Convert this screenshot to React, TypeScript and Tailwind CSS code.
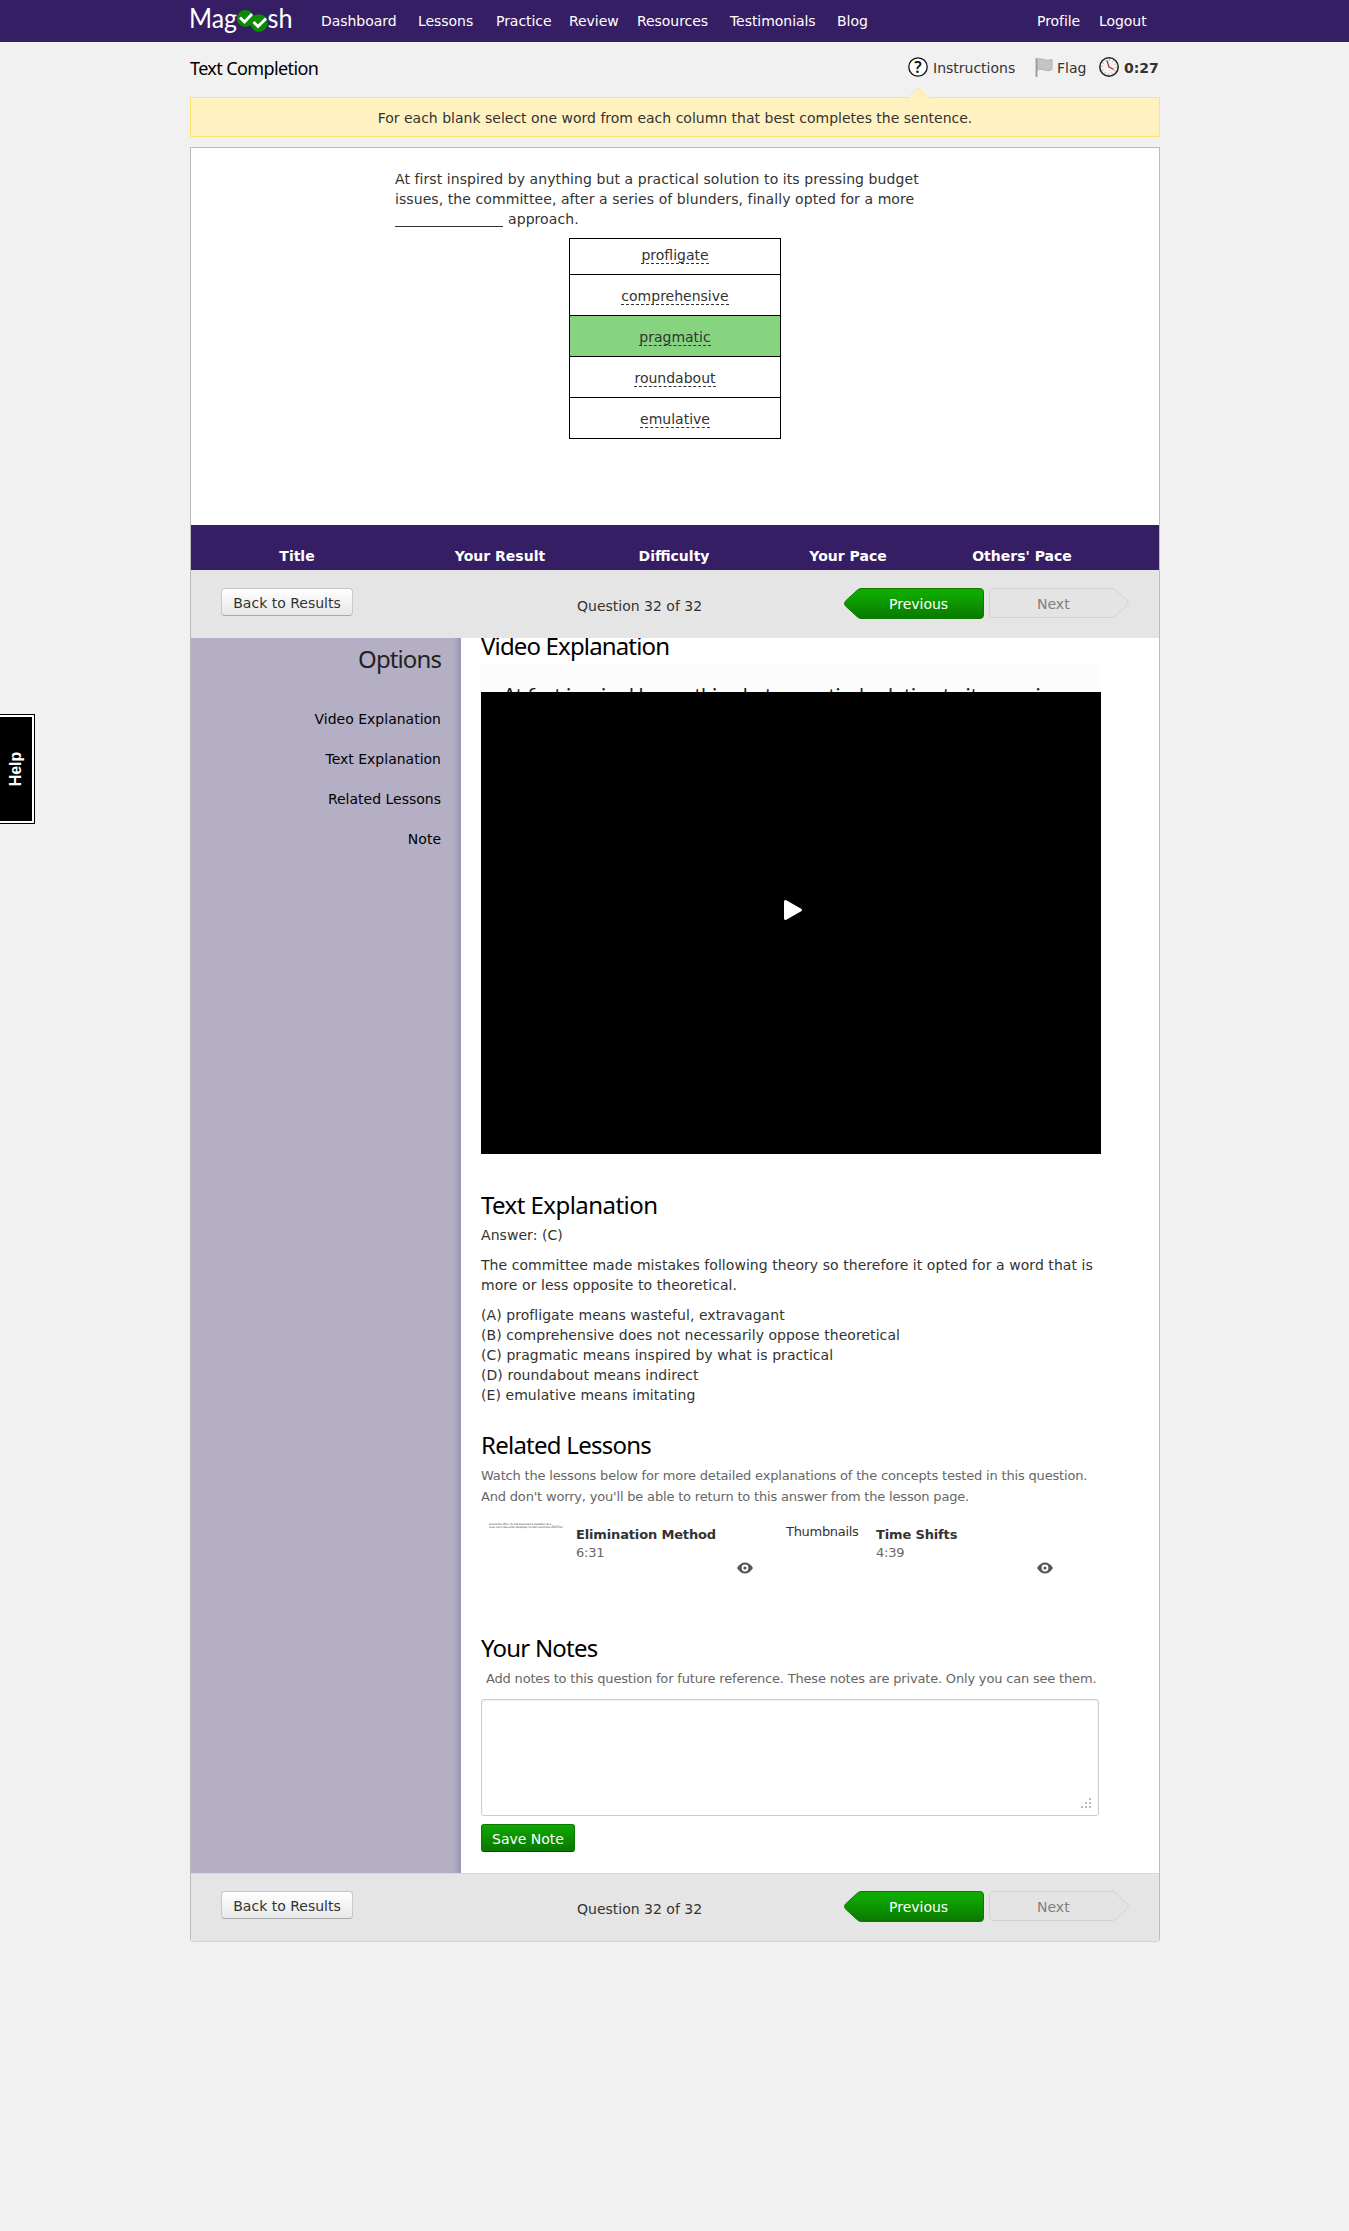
import React from "react";

const head = "font-['Noto_Sans',sans-serif] text-[24px] leading-[30px] text-black";

function NavBar() {
  const links = [
    ["Dashboard", "w-[97px]"], ["Lessons", "w-[78px]"], ["Practice", "w-[73px]"], ["Review", "w-[68px]"],
    ["Resources", "w-[93px]"], ["Testimonials", "w-[107px]"], ["Blog", "w-[200px]"], ["Profile", "w-[62px]"], ["Logout", "w-[52px]"],
  ];
  return (
    <nav className="h-[42px] bg-[#361e64] text-white">
      <div className="ml-[190px] flex w-[970px] items-start pt-[11px]">
        <svg className="-mt-[8px] mr-[29px] shrink-0" width="102" height="34" viewBox="0 0 102 34">
          <g fill="#fff" fontFamily="Lato, sans-serif" fontSize="27">
            <text x="-1" y="24.5" textLength="48" lengthAdjust="spacingAndGlyphs">Mag</text>
            <text x="77.5" y="24.5" textLength="25" lengthAdjust="spacingAndGlyphs">sh</text>
          </g>
          <circle cx="55.5" cy="15.5" r="8.5" fill="#0f8a07" />
          <circle cx="69" cy="20" r="8.7" fill="#0f8a07" />
          <g fill="none" stroke="#fff" strokeWidth="2.8">
            <path d="M50 14.500L54.500 19L62 11" />
            <path d="M63.500 19L68 23.500L76 15.500" />
          </g>
        </svg>
        {links.map(([t, w]) => (
          <a key={t} className={`${w} shrink-0 whitespace-nowrap leading-5 tracking-[-0.05px]`}>{t}</a>
        ))}
      </div>
    </nav>
  );
}

function Clock() {
  return (
    <svg width="20" height="20" viewBox="0 0 20 20">
      <circle cx="10" cy="10" r="9.200" fill="#f4f4f4" stroke="#222" strokeWidth="1.500" />
      <circle cx="10" cy="10" r="7" fill="none" stroke="#bbb" strokeWidth="2" strokeDasharray="1 2.660" />
      <path d="M8 3.500L10 10L15 12.500" fill="none" stroke="#b33030" strokeWidth="1.300" />
    </svg>
  );
}

function TopRow() {
  return (
    <div className="flex h-[55px] justify-between">
      <h1 className="pt-[14px] font-['Noto_Sans',sans-serif] text-[18px] leading-[24px] tracking-[-0.6px] text-black">Text Completion</h1>
      <div className="flex w-[252px] pt-[15px] leading-[22px]">
        <svg className="mr-[5px] shrink-0" width="20" height="20" viewBox="0 0 20 20">
          <circle cx="10" cy="10" r="9.200" fill="#fff" stroke="#111" strokeWidth="1.300" />
          <text x="10" y="15.800" textAnchor="middle" fontSize="16" fontWeight="600" fill="#111" fontFamily="Noto Sans">?</text>
        </svg>
        <span className="w-[102px] shrink-0">Instructions</span>
        <svg className="mr-[4px] shrink-0" width="18" height="20" viewBox="0 0 18 20">
          <path d="M1.500 1V20" stroke="#999" strokeWidth="1.800" />
          <path d="M2.500 2.500C6 0 10 5 17 2.500V12.500C11 16 8 10 2.500 13Z" fill="#c4c4c4" stroke="#b0b0b0" />
        </svg>
        <span className="w-[42px] shrink-0">Flag</span>
        <Clock />
        <b className="ml-[5px]">0:27</b>
      </div>
    </div>
  );
}

function Pager({ size }: { size: string }) {
  return (
    <div className={`${size} flex bg-[#e5e5e5] pl-[30px]`}>
      <button className="h-[28px] w-[132px] shrink-0 rounded-[4px] border border-[#c8c8c8] border-b-[#a8a8a8] bg-gradient-to-b from-white to-[#e8e8e8] pt-[1px] leading-[26px]">Back to Results</button>
      <span className="ml-[224px] w-[267px] pt-[6px] leading-[24px]">Question 32 of 32</span>
      <div className="relative h-[31px] w-[140px]">
        <svg className="absolute inset-0" width="140" height="31">
          <defs>
            <linearGradient id="g" x1="0" y1="0" x2="0" y2="1">
              <stop offset="0.200" stopColor="#0fa800" /><stop offset="1" stopColor="#0a7800" />
            </linearGradient>
          </defs>
          <path d="M17 .500H136Q139.500 .500 139.500 4V27Q139.500 30.500 136 30.500H17Q15 30.500 13 28.500L1.500 18Q-.500 15.500 1.500 13L13 2.500Q15 .500 17 .500Z" fill="url(#g)" stroke="#0b7a04" />
        </svg>
        <span className="relative ml-[45px] leading-[32px] text-white">Previous</span>
      </div>
      <div className="relative ml-[5px] h-[31px] w-[140px]">
        <svg className="absolute inset-0" width="140" height="31">
          <path d="M4 .500H123Q125 .500 126 1.500L138.500 13Q140.500 15 138.500 17L126 28.500Q125 29.500 123 29.500H4Q.500 29.500 .500 26V4Q.500 .500 4 .500Z" fill="#e4e4e4" stroke="#d2d2d2" />
        </svg>
        <span className="relative ml-[48px] leading-[32px] text-[#808080]">Next</span>
      </div>
    </div>
  );
}

function Choices() {
  const rows = [
    ["profligate", "h-[36px] pt-[7px]"],
    ["comprehensive", "h-[41px] pt-[12px]"],
    ["pragmatic", "h-[41px] pt-[12px] bg-[#87d480]"],
    ["roundabout", "h-[41px] pt-[12px]"],
    ["emulative", "h-[41px] pt-[12px]"],
  ];
  return (
    <div className="ml-[378px] mt-[9px] w-[212px] border border-b-0 border-black">
      {rows.map(([w, c]) => (
        <div key={w} className={`${c} border-b border-black text-center leading-[18px]`}>
          <span className="inline-block h-[18px] border-b border-dashed border-[#333] leading-[18px]">{w}</span>
        </div>
      ))}
    </div>
  );
}

function Eye() {
  return (
    <svg width="16" height="12" viewBox="0 0 16 12">
      <path d="M0 6Q3.500 .500 8 .500T16 6Q12.500 11.500 8 11.500T0 6Z" fill="#555" />
      <circle cx="8" cy="6" r="3.400" fill="#fff" /><circle cx="8" cy="6" r="1.600" fill="#555" />
    </svg>
  );
}

function Lesson({ thumb, title, time }: { thumb: React.ReactNode; title: string; time: string }) {
  return (
    <div className="flex h-[110px] w-[300px] text-[13px]">
      <div className="w-[95px] pl-[5px]">{thumb}</div>
      <div className="w-[180px] pt-[5px] leading-[18px]">
        <b className="tracking-[-0.15px] text-[#333]">{title}</b>
        <div className="tracking-[-0.2px] text-[#666]">{time}</div>
        <div className="ml-[161px]"><Eye /></div>
      </div>
    </div>
  );
}

function Explanation() {
  return (
    <div className="h-[1235px] flex-1 overflow-hidden pl-[20px]">
      <h2 className={`${head} -mt-[7px] tracking-[-0.85px]`}>Video Explanation</h2>
      <div className="mt-[4px] h-[27px] w-[620px] overflow-hidden bg-[#fcfcfc] pl-[22px] pt-[17px]">
        <div className="whitespace-nowrap font-['Lato',sans-serif] text-[19.5px] leading-[26px] text-[#222]">At first inspired by anything but a practical solution to its pressing</div>
      </div>
      <div className="flex h-[462px] w-[620px] items-center justify-center bg-black">
        <svg className="-mt-[26px] ml-[4px]" width="20" height="22" viewBox="0 0 20 22"><path d="M2.500 2.500L17.500 11L2.500 19.500Z" fill="#fff" stroke="#fff" strokeWidth="3" strokeLinejoin="round" /></svg>
      </div>
      <h2 className={`${head} mt-[36px] tracking-[-0.55px]`}>Text Explanation</h2>
      <div className="whitespace-nowrap tracking-[0.06px]">
        <p className="mt-[5px]">Answer: (C)</p>
        <p className="mt-[10px]">The committee made mistakes following theory so therefore it opted for a word that is<br />more or less opposite to theoretical.</p>
        <p className="mt-[10px]">
          (A) profligate means wasteful, extravagant<br />(B) comprehensive does not necessarily oppose theoretical<br />(C) pragmatic means inspired by what is practical<br />(D) roundabout means indirect<br />(E) emulative means imitating
        </p>
      </div>
      <h2 className={`${head} mt-[25px] tracking-[-0.75px]`}>Related Lessons</h2>
      <p className="mt-[5px] whitespace-nowrap text-[13px] leading-[21px] tracking-[-0.18px] text-[#666]">Watch the lessons below for more detailed explanations of the concepts tested in this question.<br />And don't worry, you'll be able to return to this answer from the lesson page.</p>
      <div className="mt-[14px] flex">
        <Lesson title="Elimination Method" time="6:31" thumb={
          <svg width="80" height="10" fill="#333" fontFamily="DejaVu Sans, sans-serif" fontSize="2.800">
            <text x="3" y="3.800" textLength="71" lengthAdjust="spacingAndGlyphs">Around the office, he had developed a reputation as a ______ :</text>
            <text x="3" y="6.600" textLength="74" lengthAdjust="spacingAndGlyphs">never one to take unfair advantage, he often would help others first.</text>
          </svg>} />
        <Lesson title="Time Shifts" time="4:39" thumb={<div className="pt-[2px] leading-[18px] tracking-[-0.3px]">Thumbnails</div>} />
      </div>
      <h2 className={`${head} mt-[2px] tracking-[-0.8px]`}>Your Notes</h2>
      <p className="ml-[5px] mt-[6px] whitespace-nowrap text-[13px] leading-[20px] tracking-[-0.18px] text-[#666]">Add notes to this question for future reference. These notes are private. Only you can see them.</p>
      <div className="mt-[10px] flex h-[117px] w-[618px] items-end justify-end rounded-[3px] border border-[#ccc] p-[6px] shadow-[inset_0_1px_2px_#eee]">
        <svg width="11" height="11" fill="#bbb"><path d="M8 0h2v2H8zM4 4h2v2H4zM8 4h2v2H8zM0 8h2v2H0zM4 8h2v2H4zM8 8h2v2H8z" /></svg>
      </div>
      <button className="mt-[8px] h-[28px] w-[94px] rounded-[3px] border border-[#0b7a04] border-b-[#064d00] bg-gradient-to-b from-[#0fa800] to-[#0a7800] pt-[1px] leading-[26px] text-white">Save Note</button>
    </div>
  );
}

export default function App() {
  return (
    <div className="relative h-[2231px] w-[1349px] overflow-hidden bg-[#f1f1f1] font-['DejaVu_Sans',sans-serif] text-[14px] leading-[20px] text-[#333]">
      <NavBar />
      <main className="ml-[190px] w-[970px]">
        <TopRow />
        <div className="relative h-[40px] border border-[#ffe46f] bg-[#fff2c0] text-center leading-[40px]">
          <svg className="absolute -top-[11px] left-[716px]" width="22" height="12"><path d="M0 12L11 1L22 12" fill="#fff2c0" stroke="#fde78f" /></svg>
          For each blank select one word from each column that best completes the sentence.
        </div>
        <section className="mt-[10px] overflow-hidden rounded-b-[4px] border border-[#bbb] border-b-[#d4d4d4] bg-white">
          <div className="h-[377px] pt-[21px]">
            <p className="ml-[204px] whitespace-nowrap tracking-[0.08px]">At first inspired by anything but a practical solution to its pressing budget<br />issues, the committee, after a series of blunders, finally opted for a more<br /><span className="mr-[5px] inline-block h-[15px] w-[108px] border-b border-[#333] align-[-3px]" />approach.</p>
            <Choices />
          </div>
          <div className="flex h-[45px] bg-[#361e64] pl-[19px] pt-[21px] text-center font-bold text-white">
            <span className="w-[174px]">Title</span><span className="w-[232px]">Your Result</span><span className="w-[116px]">Difficulty</span><span className="w-[232px]">Your Pace</span><span className="w-[116px]">Others' Pace</span>
          </div>
          <Pager size="h-[68px] pt-[18px]" />
          <div className="flex h-[1235px]">
            <aside className="w-[270px] bg-[linear-gradient(90deg,#b5afc6_0,#b5afc6_262px,#9c94b4_270px)] pr-[20px] text-right text-black">
              <h2 className="mb-[30px] pt-[5px] font-['Noto_Sans',sans-serif] text-[24px] leading-[32px] tracking-[-0.9px] text-[#222]">Options</h2>
              <div className="flex flex-col gap-[20px] pt-[4px]"><a>Video Explanation</a><a>Text Explanation</a><a>Related Lessons</a><a>Note</a></div>
            </aside>
            <Explanation />
          </div>
          <div className="border-t border-[#d8d8d8]"><Pager size="h-[67px] pt-[17px]" /></div>
        </section>
      </main>
      <div className="absolute left-0 top-[714px] flex h-[110px] w-[35px] items-center border border-l-0 border-black bg-white">
        <div className="flex h-[104px] w-[32px] items-center justify-center bg-black">
          <span className="-rotate-90 font-['Liberation_Sans',sans-serif] text-[16px] font-bold text-white">Help</span>
        </div>
      </div>
    </div>
  );
}
